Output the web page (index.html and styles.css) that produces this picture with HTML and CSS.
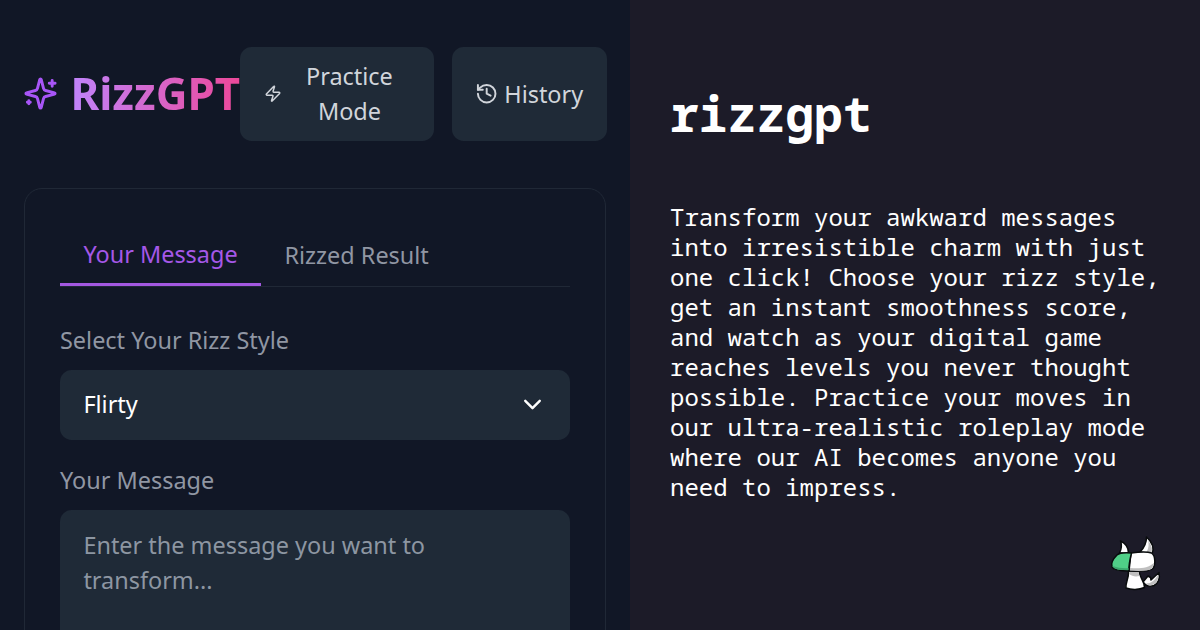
FILE: index.html
```html
<!DOCTYPE html>
<html lang="en">
<head>
    <meta charset="UTF-8">
    <meta name="viewport" content="width=device-width, initial-scale=1.0">
    <title>rizzgpt</title>
    <link rel="stylesheet" href="styles.css">
</head>
<body>
    <div class="app">
        <header class="header">
            <div class="logo">
                <svg class="logo-icon" viewBox="0 0 24 24">
                    <path d="M9.937 15.5A2 2 0 0 0 8.5 14.063l-6.135-1.582a.5.5 0 0 1 0-.962L8.5 9.936A2 2 0 0 0 9.937 8.5l1.582-6.135a.5.5 0 0 1 .963 0L14.063 8.5A2 2 0 0 0 15.5 9.937l6.135 1.581a.5.5 0 0 1 0 .964L15.5 14.063a2 2 0 0 0-1.437 1.437l-1.582 6.135a.5.5 0 0 1-.963 0z"/>
                    <path d="M20 3v4M22 5h-4M4 17v2M5 18H3"/>
                </svg>
                <h1>RizzGPT</h1>
            </div>
            <div class="actions">
                <button class="btn btn-practice">
                    <svg class="zap-icon" viewBox="0 0 24 24">
                        <path d="M4 14a1 1 0 0 1-.78-1.63l9.9-10.2a.5.5 0 0 1 .86.46l-1.92 6.02A1 1 0 0 0 13 10h7a1 1 0 0 1 .78 1.63l-9.9 10.2a.5.5 0 0 1-.86-.46l1.92-6.02A1 1 0 0 0 11 14z"/>
                    </svg>
                    <span>Practice Mode</span>
                </button>
                <button class="btn btn-history">
                    <svg class="history-icon" viewBox="0 0 24 24">
                        <path d="M3 12a9 9 0 1 0 9-9 9.75 9.75 0 0 0-6.74 2.74L3 8"/>
                        <path d="M3 3v5h5M12 7v5l4 2"/>
                    </svg>
                    <span>History</span>
                </button>
            </div>
        </header>

        <main class="card">
            <div class="tabs">
                <div class="tab active">Your Message</div>
                <div class="tab">Rizzed Result</div>
            </div>
            <div class="label">Select Your Rizz Style</div>
            <div class="select">
                <span>Flirty</span>
                <svg class="chevron" viewBox="0 0 24 24"><path d="m6 9 6 6 6-6"/></svg>
            </div>
            <div class="label">Your Message</div>
            <div class="message-box">Enter the message you want to transform...</div>
        </main>
    </div>

    <aside class="about">
        <h2>rizzgpt</h2>
        <p>Transform your awkward messages into irresistible charm with just one click! Choose your rizz style, get an instant smoothness score, and watch as your digital game reaches levels you never thought possible. Practice your moves in our ultra-realistic roleplay mode where our AI becomes anyone you need to impress.</p>
        <svg class="mascot" viewBox="0 0 75 75">
            <!-- horns -->
            <path class="white" d="M19.500 28C21.500 24 22 20 20.500 16C25 18 28.500 22 28.500 28Z"/>
            <path class="white" d="M40 27C44 23 46.500 18 46.500 12C52 17 54.500 23 52 29Z"/>
            <path class="shade" d="M48 15.500C51.500 20 53 24 51 28L46.500 27C49 23 49 19 48 15.500Z"/>
            <!-- tail -->
            <path class="white" d="M43 57L48 51L50.500 52.500L51 55L59 47.500C60 53 58.500 58 54 60.500C49 62.500 46 61 43 57Z"/>
            <path class="shade" d="M46 58.500C51 58.500 55 55 58 50C59 55 56 59 52 60C49 61 47.500 60 46 58.500Z"/>
            <!-- body -->
            <path class="white" d="M28.500 46L39 46C40 54 44.500 56 44.500 62.500C39 65 31 65 26 63C25 58 29 54 28.500 46Z"/>
            <path class="shade" d="M29 47H38.500L39.500 51C35 52 32 51 29 49Z"/>
            <!-- head -->
            <path class="white" d="M31 28C39 27 47 26.500 51.500 28C56 31 55.500 41 52.500 44C48 47 36 46.500 29 46Z"/>
            <path class="shade" d="M30 43C40 44 48 43 54 38C53 42 52 44 49 45C43 46 36 46 30 45Z"/>
            <path class="green" d="M31.500 28C26 27.500 20 27.500 17 30C13 34 11 39 12 42C14 46 23 46 29 46C28.500 40 29.500 36 31.500 28Z"/>
            <path class="green-shade" d="M13 41C18 43 24 43.500 28.500 43L28.500 45C22 45 14 45 13 41Z"/>
        </svg>
    </aside>
</body>
</html>
```

FILE: styles.css
```css
* {
    box-sizing: border-box;
}
html {
    font-size: 23.44px;
}
body {
    margin: 0;
    height: 630px;
    display: flex;
    overflow: hidden;
    background-color: #1c1b28;
    font-family: "Noto Sans", sans-serif;
    line-height: 1.5;
}
svg {
    fill: none;
    stroke: currentColor;
    stroke-width: 2;
    stroke-linecap: round;
    stroke-linejoin: round;
    flex-shrink: 0;
}
.app {
    width: 630px;
    height: 630px;
    padding: 47px 24px 0;
    background-color: #111726;
    overflow: hidden;
}
.header {
    display: flex;
    align-items: center;
    height: 93.5px;
    margin: 0 -1px 47px -0.6px;
}
.logo {
    display: flex;
    align-items: center;
    gap: 12px;
    width: 216.6px;
}
.logo-icon {
    width: 35px;
    height: 35px;
    color: #a855f7;
}
.logo h1 {
    margin: 0;
    font-size: 43.95px;
    line-height: 53px;
    font-weight: 700;
    color: transparent;
    background-image: linear-gradient(to right, #c084fc, #ec4899);
    -webkit-background-clip: text;
    background-clip: text;
}
.actions {
    display: flex;
    gap: 17.6px;
}
.btn {
    display: flex;
    align-items: center;
    height: 93.5px;
    padding: 11.7px 23.4px;
    border: none;
    border-radius: 11.7px;
    background-color: #1f2a37;
    color: #d1d5db;
    font-family: inherit;
    font-size: 1rem;
    line-height: 1.5;
    text-align: center;
}
.btn-practice {
    width: 194px;
    gap: 5.9px;
    padding-left: 24.4px;
}
.btn-practice span {
    flex: 1;
}
.btn-history {
    width: 155px;
    gap: 5.9px;
}
.btn-history span {
    padding-top: 1.5px;
}
.zap-icon {
    width: 18px;
    height: 23.4px;
}
.history-icon {
    width: 23.4px;
    height: 23.4px;
}
.card {
    height: 600px;
    padding: 35px;
    border: 1.5px solid #202836;
    border-radius: 18px;
}
.tabs {
    display: flex;
    height: 63px;
    margin-bottom: 36px;
    border-bottom: 1.5px solid #202836;
}
.tab {
    padding: 14px 23.4px 0;
    color: #9096a3;
}
.tab.active {
    height: 62px;
    padding-top: 13px;
    border-bottom: 3px solid #a358e0;
    color: #a558e8;
}
.label {
    margin-bottom: 12px;
    color: #9096a3;
}
.select {
    display: flex;
    align-items: center;
    justify-content: space-between;
    height: 70px;
    margin-bottom: 23.5px;
    padding: 0 23.4px;
    border-radius: 11.7px;
    background-color: #1f2a37;
    color: #fff;
}
.chevron {
    width: 29px;
    height: 29px;
}
.message-box {
    height: 190px;
    padding: 17.6px 23.4px;
    border-radius: 11.7px;
    background-color: #1f2a37;
    color: #8d96a2;
}
.about {
    flex: 1;
    position: relative;
    padding: 83px 40px 0;
    color: #fff;
    font-family: "Noto Sans Mono", "DejaVu Sans Mono", monospace;
}
.about h2 {
    margin: 0 0 57px;
    font-size: 48px;
    line-height: 62px;
    font-weight: 700;
}
.about p {
    margin: 0;
    font-size: 24px;
    line-height: 30px;
}
.mascot {
    position: absolute;
    left: 470px;
    top: 525px;
    width: 75px;
    height: 75px;
    stroke: #080b0c;
    stroke-width: 1.5;
}
.mascot .white {
    fill: #fff;
}
.mascot .green {
    fill: #4fcf87;
}
.mascot .shade {
    fill: #bfbfbf;
    stroke: none;
}
.mascot .green-shade {
    fill: #39a66c;
    stroke: none;
}
```
